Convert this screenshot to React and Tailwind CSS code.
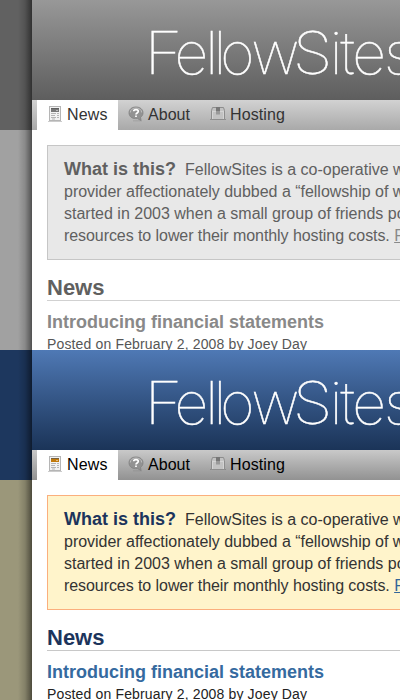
import React from "react";

const themes = {
  gray: {
    top: "bg-[#616161]",
    side: "bg-[#a1a1a1]",
    banner: "bg-linear-to-b from-[#989898] to-[#5e5e5e]",
    nav: "bg-linear-to-b from-[#d2d2d2] to-[#a9a9a9]",
    navText: "text-[#333]",
    box: "bg-[#e8e8e8] border-[#c6c6c6]",
    strong: "text-[#606060]",
    body: "text-[#606060]",
    link: "text-[#898989]",
    heading: "text-[#606060]",
    rule: "border-[#d1d1d1]",
    title: "text-[#898989]",
    meta: "text-[#565656]",
    accent: "#777",
  },
  blue: {
    top: "bg-[#1d375e]",
    side: "bg-[#9b977a]",
    banner: "bg-linear-to-b from-[#4f79b5] to-[#1b3458]",
    nav: "bg-linear-to-b from-[#c9c9c9] to-[#929292]",
    navText: "text-black",
    box: "bg-[#fff4cb] border-[#fbaf7d]",
    strong: "text-[#1c345c]",
    body: "text-[#333]",
    link: "text-[#336699]",
    heading: "text-[#1c345c]",
    rule: "border-[#c8c8c8]",
    title: "text-[#356a9f]",
    meta: "text-[#222]",
    accent: "#c27a0c",
  },
};

function NewsIcon({ accent }) {
  return (
    <svg width="16" height="16" viewBox="0 0 16 16">
      <path d="M1 15.500h14" stroke="#999" strokeOpacity=".5" />
      <rect x="2.500" y=".5" width="11" height="14" fill="#f3f3f3" stroke="#b5b5b5" />
      <rect x="4" y="2" width="8" height="4" fill={accent} />
      <path d="M4 2.500h8" stroke="#555" strokeOpacity=".7" />
      <path d="M9 4.500h2" stroke="#fff" strokeOpacity=".5" />
      <path d="M4 7.500h5M10 7.500h2M4 9.500h4M10 9.500h2M4 11.500h5M10 11.500h2M5 13h3" stroke="#b5b5b5" />
    </svg>
  );
}

function AboutIcon() {
  return (
    <svg width="16" height="16" viewBox="0 0 16 16">
      <path d="M5 14.800h9" stroke="#777" strokeOpacity=".3" />
      <path d="M8 1C3.800 1 1 3.300 1 6.800s2.800 5.800 6.500 5.800h2L13 14.500l-.4-3.200C14.200 10.200 15 8.700 15 6.800 15 3.300 12 1 8 1Z" fill="#929292" stroke="#808080" strokeWidth=".8" />
      <path d="M2.300 6.500C2.500 3.500 5 2 8 2s5.500 1.500 5.700 4.500" fill="none" stroke="#c0c0c0" />
      <path d="M5.700 5.200C5.700 3 10.300 2.900 10.300 5.300 10.300 7 8 6.900 8 8.500M8 9.500v1.600" fill="none" stroke="#fff" strokeWidth="1.700" />
    </svg>
  );
}

function HostingIcon() {
  return (
    <svg width="16" height="16" viewBox="0 0 16 16">
      <path d="M0 13.500h16" stroke="#777" strokeOpacity=".6" />
      <path d="M2.500 1.500h11l1 3v9h-13v-9Z" fill="#c2c2c2" stroke="#8d8d8d" />
      <path d="M2 5.500h12M2.500 5v8M13.500 5v8" stroke="#d4d4d4" />
      <path d="M6 1h4v4H6Z" fill="#777" />
      <path d="M6 5v4l1-1 1 1 1-1 1 1V5Z" fill="#999" />
    </svg>
  );
}

function Logo() {
  return (
    <div className="whitespace-nowrap font-['Inter',sans-serif] text-[59px] font-thin leading-[72px] text-white [-webkit-text-stroke:0.5px_white]">
      <span className="inline-block origin-[5px_50%] scale-x-[1.1] tracking-[-5px]">F</span>
      <span className="tracking-[-3px]">e</span>
      <span className="tracking-[-4.5px]">l</span>
      <span className="tracking-[-6px]">l</span>
      <span className="tracking-[-3px]">o</span>
      <span className="tracking-[-6px]">w</span>
      <span className="inline-block origin-[3px_50%] scale-x-[1.1] tracking-[0.5px]">S</span>
      <span className="tracking-[-2px]">ites</span>
    </div>
  );
}

function Page({ t }) {
  return (
    <section className="flex h-[350px] w-[400px] overflow-hidden bg-white">
      <aside className="relative flex w-8 shrink-0 flex-col">
        <div className={`h-[130px] ${t.top}`} />
        <div className={`flex-1 ${t.side}`} />
        <div className="absolute inset-y-0 right-0 w-3.5 bg-linear-to-r from-black/0 via-black/15 to-black/50" />
      </aside>
      <div className="w-[368px] shrink-0 overflow-hidden">
        <header className={`h-[100px] overflow-hidden pl-[113px] pt-[17px] ${t.banner}`}>
          <Logo />
        </header>
        <nav className={`flex h-[30px] pl-[5px] text-[16px] ${t.nav} ${t.navText}`}>
          <div className="flex w-[81px] items-start gap-1 bg-white pl-2.5 pt-1.5">
            <NewsIcon accent={t.accent} />
            <span className="leading-[18px] tracking-[0.15px]">News</span>
          </div>
          <div className="flex w-[82px] items-start gap-1 pl-2.5 pt-1.5">
            <AboutIcon />
            <span className="leading-[18px] tracking-[0.05px]">About</span>
          </div>
          <div className="flex items-start gap-1 pl-2.5 pt-1.5">
            <HostingIcon />
            <span className="leading-[18px] tracking-[0.1px]">Hosting</span>
          </div>
        </nav>
        <main className="pl-[15px] pt-[15px]">
          <div className={`h-[115px] w-[500px] whitespace-nowrap border pl-4 pt-3 text-[16px] leading-[22px] ${t.box} ${t.body}`}>
            <p><strong className={`mr-[9px] text-[18px] ${t.strong}`}>What is this?</strong>FellowSites is a co-operative web hosting</p>
            <p className="tracking-[-0.02px]">provider affectionately dubbed a “fellowship of websites.” It</p>
            <p>started in 2003 when a small group of friends pooled their</p>
            <p className="tracking-[-0.07px]">resources to lower their monthly hosting costs. <a className={`underline ${t.link}`}>Read more</a></p>
          </div>
          <h2 className={`mt-[14px] h-[27px] w-[500px] border-b text-[22px] font-bold leading-[27px] ${t.heading} ${t.rule}`}>News</h2>
          <h3 className={`mt-[10px] whitespace-nowrap text-[18px] font-bold leading-[22px] ${t.title}`}>Introducing financial statements</h3>
          <p className={`mt-[2px] whitespace-nowrap text-[14px] leading-[18px] tracking-[0.15px] ${t.meta}`}>Posted on February 2, 2008 by Joey Day</p>
        </main>
      </div>
    </section>
  );
}

export default function App() {
  return (
    <div className="h-[700px] w-[400px] overflow-hidden font-['Liberation_Sans',Arial,sans-serif]">
      <Page t={themes.gray} />
      <Page t={themes.blue} />
    </div>
  );
}
